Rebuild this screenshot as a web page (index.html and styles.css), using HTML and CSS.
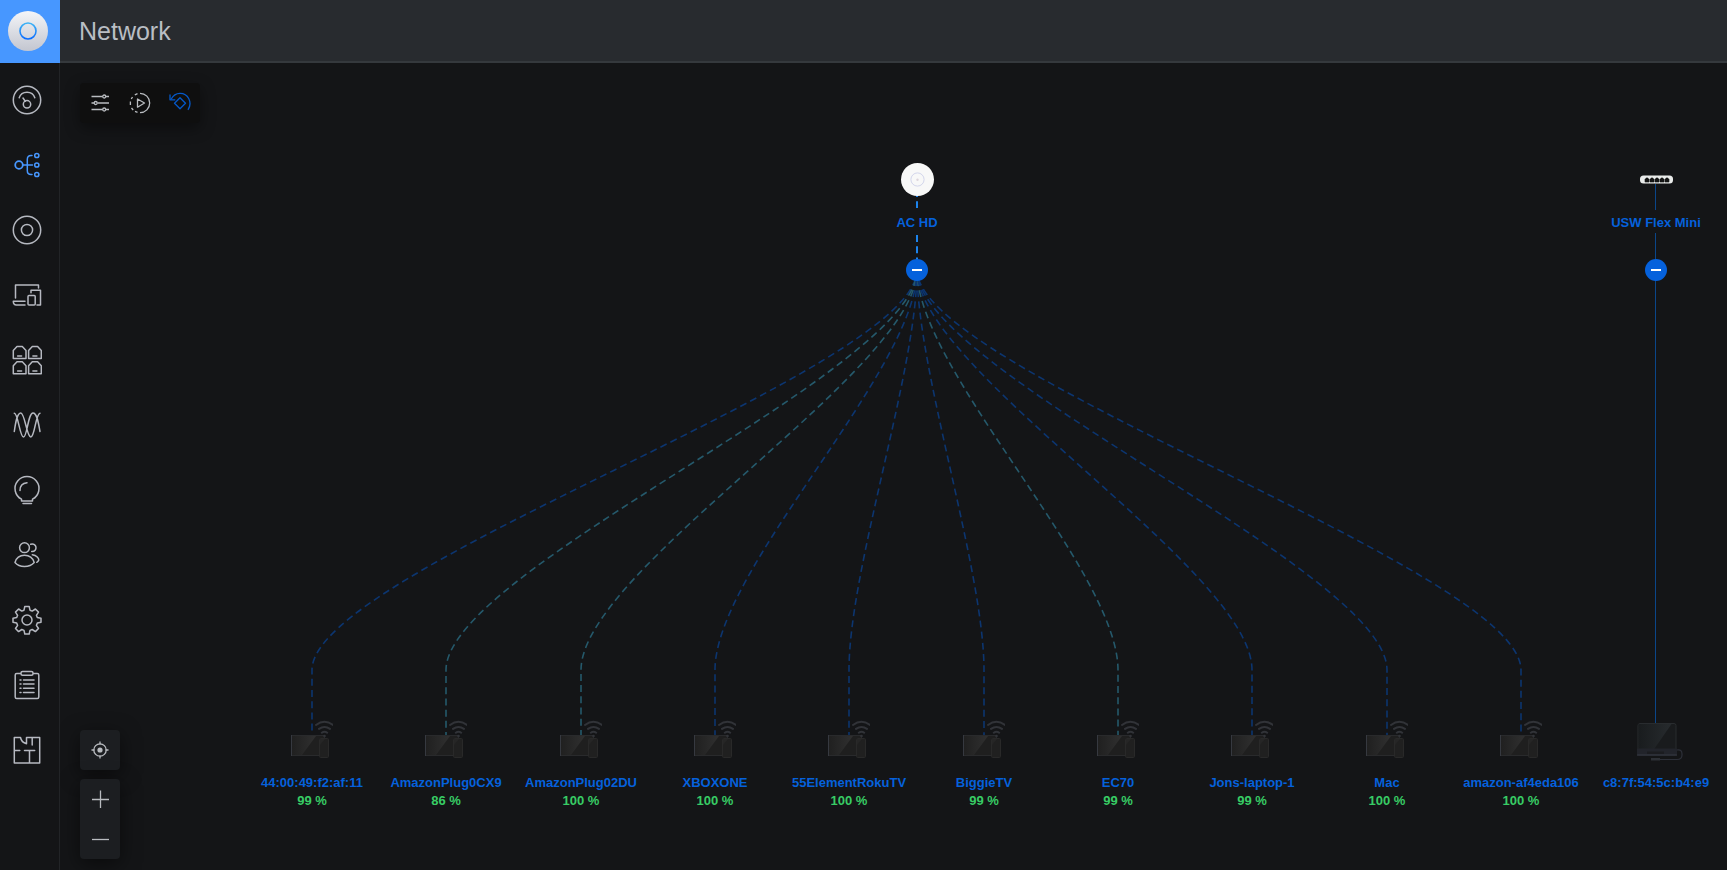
FILE: index.html
```html
<!DOCTYPE html>
<html lang="en">
<head>
<meta charset="utf-8">
<title>Network</title>
<link rel="stylesheet" href="styles.css">
</head>
<body>
<svg class="defs" aria-hidden="true">
  <defs>
    <linearGradient id="logo-disc" x1="0" y1="0" x2="0" y2="1"><stop offset="0" stop-color="#f4f5f8"/><stop offset="1" stop-color="#c3c6d0"/></linearGradient>
    <linearGradient id="logo-ring" x1="0" y1="0" x2="0" y2="1"><stop offset="0" stop-color="#3fb4f5"/><stop offset="1" stop-color="#0a6cff"/></linearGradient>
    <linearGradient id="screen" x1="0" y1="0" x2="1" y2="0"><stop offset="0" stop-color="#202020"/><stop offset="1" stop-color="#303030"/></linearGradient>
    <linearGradient id="lid" x1="0" y1="0" x2="1" y2="0"><stop offset="0" stop-color="#191c1e"/><stop offset="1" stop-color="#272b2e"/></linearGradient>
    <symbol id="tv" viewBox="0 0 42 40">
      <rect x=".5" y="15.500" width="33" height="20" fill="#1f1f1f" stroke="#292a2c"/>
      <path d="M1 16h24L11 35H1z" fill="url(#screen)"/>
      <path d="M.5 15v21" stroke="#363940"/>
      <rect x="28.500" y="18.500" width="9" height="19" rx="1" fill="#202020" stroke="#292929"/>
      <path d="M29 19h5l-5 6z" fill="#262626"/>
      <g fill="none" stroke="#313338" stroke-width="2" stroke-linecap="round"><path d="M25 5q8.500-6.500 17 0M28 8.900q5.500-4 11 0M30.800 12.700q2.700-2 5.400 0"/></g>
      <circle cx="33.500" cy="16" r="1.300" fill="#313338"/>
    </symbol>
  </defs>
</svg>
<div class="app">
  <a class="logo" href="#" aria-label="Home">
    <svg width="40" height="40" viewBox="0 0 40 40"><circle cx="20" cy="20" r="20" fill="url(#logo-disc)"/><circle cx="20" cy="20" r="8" fill="none" stroke="url(#logo-ring)" stroke-width="1.600"/></svg>
  </a>
  <header class="header"><h1 class="title">Network</h1></header>
  <nav class="sidebar" aria-label="Main">
    <a class="nav-item" href="#" aria-label="Dashboard"><svg class="icon" viewBox="0 0 30 30"><circle cx="15" cy="15" r="13.700"/><path d="M7.200 12.800C9.500 5.500 20.500 5.500 22.800 12.800M11 13l2.300 3.300"/><circle cx="15" cy="19.300" r="3.700"/></svg></a>
    <a class="nav-item active" href="#" aria-label="Topology"><svg class="icon" viewBox="0 0 30 30"><circle cx="7" cy="15" r="3.800" stroke-width="1.800"/><circle cx="24.800" cy="5.500" r="2.100"/><circle cx="24.800" cy="15" r="2.100"/><circle cx="24.800" cy="24.500" r="2.100"/><path d="M11 15h9.500M20 5.500h-1q-3.700 0-3.700 4v11q0 4 3.700 4h1"/></svg></a>
    <a class="nav-item" href="#" aria-label="Devices"><svg class="icon" viewBox="0 0 30 30"><circle cx="15" cy="15" r="13.700"/><circle cx="15" cy="15" r="5.600"/></svg></a>
    <a class="nav-item" href="#" aria-label="Clients"><svg class="icon" viewBox="0 0 30 30"><path d="M3.500 18V5h23v3M13 21.300H1.300q0 3.700 3 3.700H13M19 12.700v-2.400h9.500V25H25"/><rect x="16" y="15.600" width="7.200" height="9.400" rx="1"/></svg></a>
    <a class="nav-item" href="#" aria-label="Ports"><svg class="icon" viewBox="0 0 30 30"><path d="M1.300 13.500v-8L5 1.500h5.300l3.700 4v8zM16.600 13.500v-8l3.700-4h5.300l3.700 4v8zM1.300 28.700v-8l3.700-4h5.300l3.700 4v8zM16.600 28.700v-8l3.700-4h5.300l3.700 4v8zM5.600 11h4M20.900 11h4M5.600 26h4M20.900 26h4"/></svg></a>
    <a class="nav-item" href="#" aria-label="Statistics"><svg class="icon" viewBox="0 0 30 30"><path d="M2.300 3.200C6 3 7.800 27 11.500 27S16 3 21 3c4 0 5.500 10 7 18.500M2.300 21.500C3.500 13 5 3 8.800 3c4 0 6 24 10 24S23.500 4 28 3.200"/></svg></a>
    <a class="nav-item" href="#" aria-label="Insights"><svg class="icon" viewBox="0 0 30 30"><path d="M9.500 26v-1.800A12 12 0 1 1 20.500 24.200V26zM11 28.500h8.500M8 15.500q0-7 7-7.700"/></svg></a>
    <a class="nav-item" href="#" aria-label="Users"><svg class="icon" viewBox="0 0 30 30"><circle cx="12.500" cy="7.700" r="4.900"/><path d="M3 22.500q2-7.200 9.500-7.200t9.700 7.200q-3.500 4-9.700 4T3 22.500zM18.700 4.200c6.200-2 7.500 7.600 1 7.300M20.300 14.800c4.500.5 6.500 3.500 6.500 5.200q-.5 1.500-2 2.300"/></svg></a>
    <a class="nav-item" href="#" aria-label="Settings"><svg class="icon" viewBox="0 0 30 30"><circle cx="15" cy="15" r="5"/><path d="M12.800 1.500h4.400l.8 3.700 2.200.9 3.200-2.100 3.100 3.100-2.100 3.200.9 2.200 3.700.8v4l-3.700.8-.9 2.200 2.100 3.200-3.100 3.100-3.200-2.100-2.200.9-.8 3.600h-4.400l-.8-3.600-2.200-.9-3.200 2.100-3.100-3.100 2.100-3.200-.9-2.200-3.700-.8v-4l3.700-.8.900-2.200-2.100-3.200 3.100-3.100 3.200 2.100 2.200-.9z"/></svg></a>
    <a class="nav-item" href="#" aria-label="Events"><svg class="icon" viewBox="0 0 30 30"><rect x="3.200" y="3.500" width="23.600" height="25" rx="1.500"/><rect x="9" y="1.500" width="12" height="3.700" rx="1.500" fill="#141517"/><path d="M11.500 10h10.500M11.500 14h10.500M11.500 18.300h10.500M11.500 22.500h10.500M8 10h1M8 14h1M8 18.300h1M8 22.500h1"/></svg></a>
    <a class="nav-item" href="#" aria-label="Floorplan"><svg class="icon" viewBox="0 0 30 30"><path d="M8.500 2.500H2.300v25.400h25.400V2.500H14.500v6.200Q9.500 7.500 8.500 2.500zM20.200 3v7M2.500 15.500h5.300M12.500 15.500h10.200M17.500 15.500V28"/></svg></a>
  </nav>
  <main class="map">
    <svg class="links" aria-hidden="true">
      <g transform="translate(-60 -63)">
        <g class="client-link">
          <path d="M917 268V270C917 370 312 570 312 670V733"/>
          <path class="fast" d="M917 268V270C917 370 446 570 446 670V735"/>
          <path class="fast" d="M917 268V270C917 370 581 570 581 670V735"/>
          <path d="M917 268V270C917 370 715 570 715 670V735"/>
          <path d="M917 268V270C917 370 849 570 849 670V735"/>
          <path d="M917 268V270C917 370 984 570 984 670V735"/>
          <path class="fast" d="M917 268V270C917 370 1118 570 1118 670V735"/>
          <path d="M917 268V270C917 370 1252 570 1252 670V735"/>
          <path d="M917 268V270C917 370 1387 570 1387 670V735"/>
          <path d="M917 268V270C917 370 1521 570 1521 670V733"/>
        </g>
        <path class="uplink" d="M917 190V208M917 235V260"/>
        <path class="wired" d="M1655.500 184V210M1655.500 233V723"/>
      </g>
    </svg>

    <div class="toolbar">
      <button class="tool" aria-label="Filters"><svg class="tool-icon" viewBox="0 0 22 22"><path d="M2.500 4.500h11M17 4.500h3M2.500 11h2.500M8.500 11h11.500M2.500 17.500h11M17 17.500h3" /><circle cx="15.200" cy="4.500" r="1.500"/><circle cx="6.700" cy="11" r="1.500"/><circle cx="15.200" cy="17.500" r="1.500"/></svg></button>
      <button class="tool" aria-label="Animate traffic"><svg class="tool-icon" viewBox="0 0 22 22"><path d="M11 1.300a9.700 9.700 0 0 1 0 19.400M8.500 1.600L5.800 2.800M3.500 5L2.300 7M1.400 9.500v3.500M2.500 16l1.700 2M6 19.300l2.500 1M8.500 7v8.200L15.500 11z"/></svg></button>
      <button class="tool blue" aria-label="Reset view"><svg class="tool-icon" viewBox="0 0 22 22"><path d="M2.300 7C6 -.5 16-.5 19.700 6.500c1.800 3.500 1.500 8-.7 11.300M1 2.500v5.300h5.300M11 5.700l5.500 5.500-5.500 5.500-5.500-5.500z"/></svg></button>
    </div>

    <div class="node" style="left:790px;top:100px">
      <svg class="device" width="33" height="33" viewBox="0 0 33 33"><circle cx="16.500" cy="16.500" r="16.500" fill="#f8f8f8"/><circle cx="16.500" cy="16.500" r="6.600" fill="none" stroke="#d3d6ec"/><circle cx="16.500" cy="16.800" r="1.200" fill="#ddd5dd"/></svg>
      <span class="name hub-name">AC HD</span>
      <button class="collapse" aria-label="Collapse AC HD"></button>
    </div>
    <div class="node" style="left:1529px;top:100px">
      <svg class="device" width="33" height="33" viewBox="0 0 33 33"><rect y="12.500" width="33" height="8" rx="3.500" fill="#e9ebea"/><path d="M5 19v-3h1v-1h2v1h1v3zM10 19v-3h1v-1h2v1h1v3zM15 19v-3h1v-1h2v1h1v3zM20 19v-3h1v-1h2v1h1v3zM25 19v-3h1v-1h2v1h1v3z" fill="#151515" stroke="#151515" stroke-width=".6"/></svg>
      <span class="name hub-name">USW Flex Mini</span>
      <button class="collapse" aria-label="Collapse USW Flex Mini"></button>
    </div>

    <div class="node" style="left:185px;top:657px"><svg class="device" width="42" height="40"><use href="#tv"/></svg><span class="name">44:00:49:f2:af:11</span><span class="score">99 %</span></div>
    <div class="node" style="left:319px;top:657px"><svg class="device" width="42" height="40"><use href="#tv"/></svg><span class="name">AmazonPlug0CX9</span><span class="score">86 %</span></div>
    <div class="node" style="left:454px;top:657px"><svg class="device" width="42" height="40"><use href="#tv"/></svg><span class="name">AmazonPlug02DU</span><span class="score">100 %</span></div>
    <div class="node" style="left:588px;top:657px"><svg class="device" width="42" height="40"><use href="#tv"/></svg><span class="name">XBOXONE</span><span class="score">100 %</span></div>
    <div class="node" style="left:722px;top:657px"><svg class="device" width="42" height="40"><use href="#tv"/></svg><span class="name">55ElementRokuTV</span><span class="score">100 %</span></div>
    <div class="node" style="left:857px;top:657px"><svg class="device" width="42" height="40"><use href="#tv"/></svg><span class="name">BiggieTV</span><span class="score">99 %</span></div>
    <div class="node" style="left:991px;top:657px"><svg class="device" width="42" height="40"><use href="#tv"/></svg><span class="name">EC70</span><span class="score">99 %</span></div>
    <div class="node" style="left:1125px;top:657px"><svg class="device" width="42" height="40"><use href="#tv"/></svg><span class="name">Jons-laptop-1</span><span class="score">99 %</span></div>
    <div class="node" style="left:1260px;top:657px"><svg class="device" width="42" height="40"><use href="#tv"/></svg><span class="name">Mac</span><span class="score">100 %</span></div>
    <div class="node" style="left:1394px;top:657px"><svg class="device" width="42" height="40"><use href="#tv"/></svg><span class="name">amazon-af4eda106</span><span class="score">100 %</span></div>
    <div class="node" style="left:1529px;top:657px">
      <svg class="device" width="54" height="40" viewBox="0 0 54 40"><rect x="9" y="3.500" width="38" height="27" rx="2" fill="#191b1d" stroke="#292c2f"/><path d="M9.500 4h33L24.500 30h-15z" fill="url(#lid)"/><path d="M8 28.500h40v5q0 2-2 2H10q-2 0-2-2z" fill="#22242b"/><path d="M18 31.500h17v2.500H18z" fill="#1b1c20"/><path d="M8 35h40" stroke="#30333d" stroke-width="1.500"/><path d="M48 30q5-1 5 4v1q0 4.500-5 4.500H30" fill="none" stroke="#2d3039" stroke-width="1.200"/><path d="M22 38h9v2.500h-9z" fill="#2d3036"/></svg>
      <span class="name">c8:7f:54:5c:b4:e9</span>
    </div>

    <div class="controls">
      <div class="control-group"><button class="control" aria-label="Center map"><svg class="tool-icon" viewBox="0 0 22 22"><circle cx="11" cy="11" r="6.200"/><circle cx="11" cy="11" r="2.600" fill="currentColor" stroke="none"/><path d="M11 2.500v3M11 16.500v3M2.500 11h3M16.500 11h3"/></svg></button></div>
      <div class="control-group">
        <button class="control" aria-label="Zoom in"><svg class="tool-icon" viewBox="0 0 22 22"><path d="M11.500 2.500v17.500M3 11.500h17"/></svg></button>
        <button class="control" aria-label="Zoom out"><svg class="tool-icon" viewBox="0 0 22 22"><path d="M3 11.500h17"/></svg></button>
      </div>
    </div>
  </main>
</div>
</body>
</html>
```
FILE: styles.css
```css
* { box-sizing: border-box; }
body {
  margin: 0;
  background: #141517;
  color: #b9bcc4;
  font-family: "Liberation Sans", Arial, sans-serif;
}
button { padding: 0; border: 0; background: none; color: inherit; cursor: pointer; }
.defs { position: absolute; width: 0; height: 0; }
.app {
  display: grid;
  grid-template-columns: 60px 1fr;
  grid-template-rows: 63px 1fr;
  min-height: 100vh;
}
.logo {
  display: flex;
  align-items: center;
  padding: 0 0 1px 8px;
  background: #4797ff;
}
.header {
  display: flex;
  align-items: center;
  padding: 0 19px;
  background: #282b2f;
  border-bottom: 2px solid #35393d;
}
.title { margin: 0; font-size: 25px; font-weight: 400; line-height: 30px; color: #b9bec4; }

.sidebar {
  display: flex;
  flex-direction: column;
  padding: 4px 5px 0 0;
  border-right: 1px solid #222427;
}
.nav-item {
  display: flex;
  align-items: center;
  justify-content: center;
  height: 65px;
  color: #b6b9c1;
}
.nav-item.active { color: #4797ff; }
.icon {
  width: 30px;
  height: 30px;
  fill: none;
  stroke: currentColor;
  stroke-width: 1.5;
  stroke-linejoin: round;
  stroke-linecap: round;
}

.map {
  position: relative;
  display: flex;
  flex-direction: column;
  align-items: flex-start;
  justify-content: space-between;
  padding: 20px 20px 11px;
  overflow: hidden;
}
.links { position: absolute; inset: 0; width: 100%; height: 100%; fill: none; }
.client-link { stroke: #0c356f; stroke-width: 1.6; stroke-dasharray: 7 4.2; }
.fast { stroke: #25596b; }
.uplink { stroke: #1c83ec; stroke-width: 2; stroke-dasharray: 7 4.2; }
.wired { stroke: #0b4689; }

.toolbar {
  position: relative;
  display: flex;
  border-radius: 4px;
  background: #0f0f0f;
  box-shadow: 0 5px 15px rgba(0, 0, 0, 0.4);
}
.tool, .control {
  display: flex;
  align-items: center;
  justify-content: center;
  width: 40px;
  height: 40px;
  padding-right: 1px;
  color: #b9bcc0;
}
.tool { padding-bottom: 1px; }
.blue { color: #0559c9; }
.tool-icon {
  width: 22px;
  height: 22px;
  fill: none;
  stroke: currentColor;
  stroke-width: 1.3;
  stroke-linejoin: round;
}
.controls { position: relative; display: flex; flex-direction: column; gap: 9px; }
.control-group {
  border-radius: 4px;
  background: #1c1e21;
  box-shadow: 0 5px 20px rgba(0, 0, 0, 0.5);
}

.node {
  position: absolute;
  display: flex;
  flex-direction: column;
  align-items: center;
  width: 134px;
  font-size: 13px;
  font-weight: 700;
  line-height: 18px;
  white-space: nowrap;
}
.device { display: block; overflow: visible; }
.name { margin-top: 14px; color: #0561dc; }
.hub-name { margin-top: 18px; }
.score { color: #38cc65; }
.collapse {
  display: flex;
  align-items: center;
  justify-content: center;
  width: 22px;
  height: 22px;
  margin-top: 27px;
  border-radius: 50%;
  background: #0561dc;
}
.collapse::before { content: ""; width: 10px; height: 2px; background: #fff; }
```
